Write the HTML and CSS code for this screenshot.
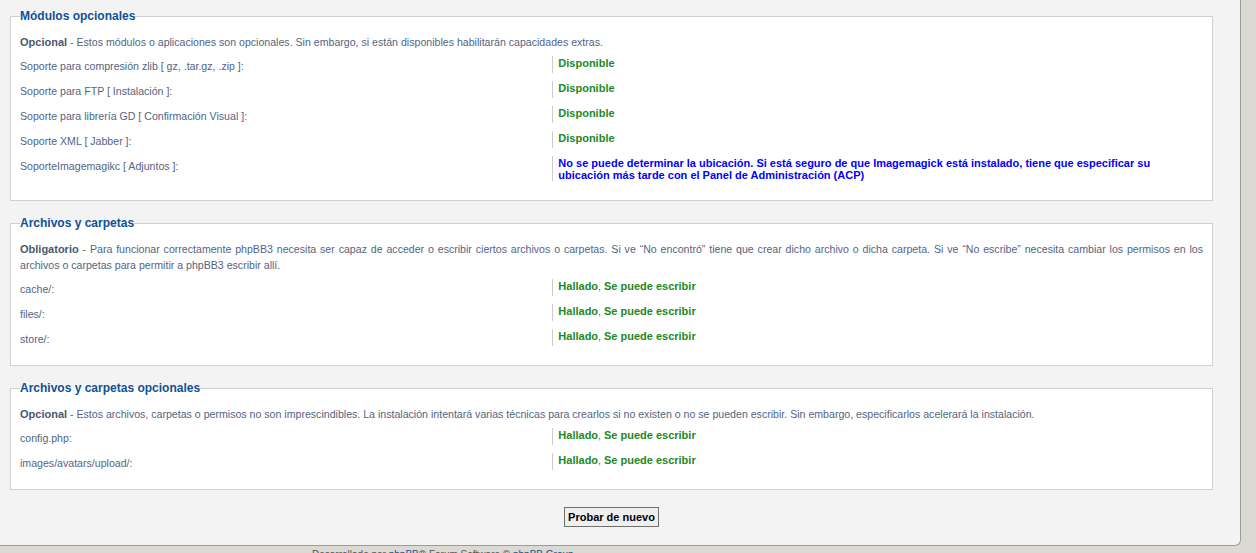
FILE: index.html
```html
<!DOCTYPE html>
<html lang="es">

<head>
    <meta charset="UTF-8">
    <title>Instalación - Requisitos</title>
    <link rel="stylesheet" href="styles.css">
</head>

<body>

    <div class="panel">
        <fieldset>
            <legend>Módulos opcionales</legend>
            <p class="intro"><strong>Opcional</strong> - Estos módulos o aplicaciones son opcionales. Sin embargo, si están disponibles habilitarán capacidades extras.</p>
            <dl>
                <dt>Soporte para compresión zlib [ gz, .tar.gz, .zip ]:</dt>
                <dd><strong class="ok">Disponible</strong></dd>
            </dl>
            <dl>
                <dt>Soporte para FTP [ Instalación ]:</dt>
                <dd><strong class="ok">Disponible</strong></dd>
            </dl>
            <dl>
                <dt>Soporte para librería GD [ Confirmación Visual ]:</dt>
                <dd><strong class="ok">Disponible</strong></dd>
            </dl>
            <dl>
                <dt>Soporte XML [ Jabber ]:</dt>
                <dd><strong class="ok">Disponible</strong></dd>
            </dl>
            <dl>
                <dt>SoporteImagemagikc [ Adjuntos ]:</dt>
                <dd><strong class="warn">No se puede determinar la ubicación. Si está seguro de que Imagemagick está instalado, tiene que especificar su ubicación más tarde con el Panel de Administración (ACP)</strong></dd>
            </dl>
        </fieldset>

        <fieldset>
            <legend>Archivos y carpetas</legend>
            <p class="intro"><strong>Obligatorio</strong> - Para funcionar correctamente phpBB3 necesita ser capaz de acceder o escribir ciertos archivos o carpetas. Si ve “No encontró” tiene que crear dicho archivo o dicha carpeta. Si ve “No escribe” necesita cambiar los permisos en los archivos o carpetas para permitir a phpBB3 escribir allí.</p>
            <dl>
                <dt>cache/:</dt>
                <dd><strong class="ok">Hallado</strong>, <strong class="ok">Se puede escribir</strong></dd>
            </dl>
            <dl>
                <dt>files/:</dt>
                <dd><strong class="ok">Hallado</strong>, <strong class="ok">Se puede escribir</strong></dd>
            </dl>
            <dl>
                <dt>store/:</dt>
                <dd><strong class="ok">Hallado</strong>, <strong class="ok">Se puede escribir</strong></dd>
            </dl>
        </fieldset>

        <fieldset>
            <legend>Archivos y carpetas opcionales</legend>
            <p class="intro"><strong>Opcional</strong> - Estos archivos, carpetas o permisos no son imprescindibles. La instalación intentará varias técnicas para crearlos si no existen o no se pueden escribir. Sin embargo, especificarlos acelerará la instalación.</p>
            <dl>
                <dt>config.php:</dt>
                <dd><strong class="ok">Hallado</strong>, <strong class="ok">Se puede escribir</strong></dd>
            </dl>
            <dl>
                <dt>images/avatars/upload/:</dt>
                <dd><strong class="ok">Hallado</strong>, <strong class="ok">Se puede escribir</strong></dd>
            </dl>
        </fieldset>

        <div class="actions">
            <button type="button" class="btn-retry">Probar de nuevo</button>
        </div>
    </div>

    <p class="copyright">Desarrollado por <a href="#">phpBB</a>® Forum Software © <a href="#">phpBB Group</a></p>

</body>

</html>
```

FILE: styles.css
```css
* {
    box-sizing: border-box;
}

body {
    margin: 0;
    background-color: #dcd8d2;
    font-family: "Liberation Sans", Arial, sans-serif;
    font-size: 10.6px;
    color: #536482;
}

strong {
    font-size: 11px;
}

.panel {
    margin-right: 15px;
    padding: 9px 27px 18px 10px;
    background-color: #f3f3f3;
    border-right: 1px solid #9c9c9c;
    border-bottom: 1px solid #9c9c9c;
    border-bottom-right-radius: 6px;
}

fieldset {
    margin: 0 0 15px;
    padding: 0 9px 15px;
    border: 1px solid #d0d0d0;
    background-color: #fff;
}

legend {
    padding: 0;
    font-size: 12px;
    font-weight: bold;
    line-height: 15px;
    color: #115098;
}

.intro {
    margin: 10px 0 2px;
    line-height: 16px;
    text-align: justify;
}

.intro strong {
    color: #4a586e;
}

dl {
    display: flex;
    margin: 0;
    padding: 4px 0;
}

dt {
    width: 45%;
    flex: none;
    padding-top: 3px;
    line-height: 14px;
}

dd {
    flex: 1;
    margin: 0;
    padding: 1px 0 0 5px;
    border-left: 1px solid #cccccc;
    line-height: 12px;
}

.ok {
    color: #228822;
}

.warn {
    color: #0000ff;
}

.actions {
    margin-top: 17px;
    text-align: center;
}

.btn-retry {
    height: 20px;
    padding: 0 3px;
    font-family: "Liberation Sans", Arial, sans-serif;
    font-size: 11px;
    font-weight: bold;
    color: #000;
    background-color: #efefef;
    border: 1px solid #707070;
    border-radius: 0;
}

.copyright {
    margin: 0;
    padding: 3px 0 0 312px;
    color: #555;
    font-size: 10px;
}

.copyright a {
    color: #105289;
    text-decoration: none;
}
```
